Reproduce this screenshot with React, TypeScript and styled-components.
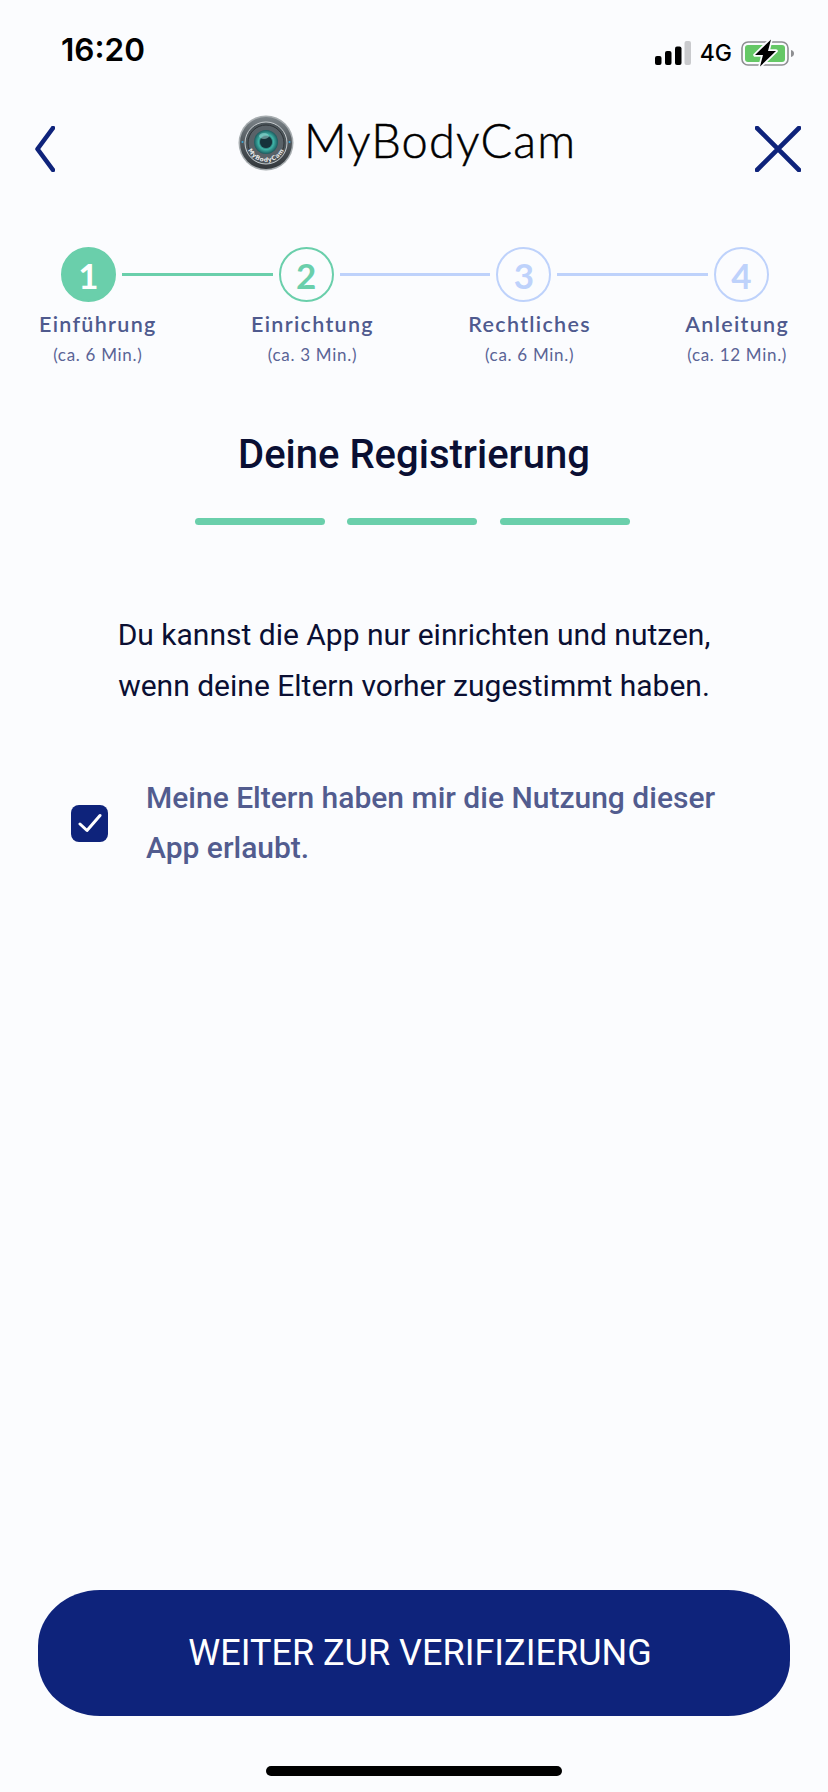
import React from 'react';
import styled, { createGlobalStyle } from 'styled-components';

const GlobalStyle = createGlobalStyle`
  html, body {
    margin: 0;
    padding: 0;
    background: #fbfcfe;
  }
  * {
    box-sizing: border-box;
  }
`;

const Page = styled.main`
  width: 828px;
  height: 1792px;
  background: #fbfcfe;
  display: flex;
  flex-direction: column;
  font-family: Roboto, 'Liberation Sans', sans-serif;
  overflow: hidden;
`;

const StatusBar = styled.div`
  height: 100px;
  padding: 28px 33px 0 61px;
  display: flex;
  justify-content: space-between;
  align-items: flex-start;
`;

const Time = styled.span`
  font-family: Inter, sans-serif;
  font-size: 31.5px;
  line-height: 44px;
  font-weight: 600;
  color: #000;
`;

const StatusIcons = styled.div`
  display: flex;
  align-items: center;
  gap: 9px;
  height: 44px;
  padding-top: 6px;
`;

const Network = styled.span`
  font-family: Inter, sans-serif;
  font-size: 23px;
  font-weight: 500;
  color: #000;
  line-height: 1;
`;

const NavBar = styled.header`
  height: 72px;
  padding: 14px 27px 0 35px;
  display: flex;
  justify-content: space-between;
  align-items: flex-start;
`;

const NavButton = styled.button`
  border: 0;
  padding: 12px 0 0;
  background: none;
  display: block;
  line-height: 0;
`;

const Brand = styled.div`
  display: flex;
  align-items: center;
  gap: 10px;
  margin: 1px 0 0 4px;
`;

const BrandName = styled.span`
  font-family: Lato, sans-serif;
  font-size: 47px;
  font-weight: 300;
  line-height: 50px;
  margin-bottom: 6px;
  letter-spacing: 1.1px;
  -webkit-text-stroke: 0.5px #000;
  color: #000;
`;

const Stepper = styled.section`
  margin-top: 75px;
`;

const StepTrack = styled.div`
  display: flex;
  align-items: center;
  padding: 0 59px 0 61px;
`;

const StepCircle = styled.div<{ $state: 'done' | 'active' | 'todo' }>`
  flex: none;
  width: 55px;
  height: 55px;
  border-radius: 50%;
  display: flex;
  align-items: center;
  justify-content: center;
  font-family: Lato, sans-serif;
  font-size: 35px;
  font-weight: 700;
  border: 2.5px solid ${({ $state }) => ($state === 'todo' ? '#bed2fb' : '#6acfab')};
  background: ${({ $state }) => ($state === 'done' ? '#6acfab' : 'transparent')};
  color: ${({ $state }) =>
    $state === 'done' ? '#fff' : $state === 'active' ? '#6acfab' : '#bed2fb'};
`;

const StepLine = styled.div<{ $done?: boolean }>`
  flex: 1;
  height: 3px;
  margin: 0 6px;
  background: ${({ $done }) => ($done ? '#6acfab' : '#bed2fb')};
`;

const StepLabels = styled.div`
  display: flex;
  justify-content: space-between;
  padding: 0 39px 0 39px;
  margin-top: 7px;
`;

const StepLabel = styled.div`
  display: flex;
  flex-direction: column;
  align-items: center;
  font-family: Lato, sans-serif;
  color: #4f5a8e;
`;

const StepName = styled.span`
  font-size: 21.5px;
  font-weight: 600;
  line-height: 30px;
  letter-spacing: 1.3px;
`;

const StepTime = styled.span`
  font-size: 17px;
  line-height: 30px;
  letter-spacing: 0.7px;
  color: #5a6496;
  margin-top: 1px;
`;

const Title = styled.h1`
  margin: 61px 0 0;
  font-size: 40px;
  line-height: 48px;
  font-weight: 500;
  text-align: center;
  color: #0a0f33;
`;

const Progress = styled.div`
  display: flex;
  justify-content: center;
  gap: 22.5px;
  margin-top: 39px;
  padding-right: 4px;
`;

const ProgressBar = styled.div`
  width: 130px;
  height: 7px;
  border-radius: 4px;
  background: #6acfab;
`;

const Intro = styled.p`
  margin: 84px 0 0;
  font-size: 30px;
  line-height: 51px;
  text-align: center;
  color: #0a0f33;
`;

const Consent = styled.label`
  display: flex;
  align-items: center;
  gap: 39px;
  margin-top: 62px;
  padding: 0 71px;
`;

const Box = styled.span`
  flex: none;
  width: 37px;
  height: 37px;
  border-radius: 8px;
  background: #0e237b;
  display: flex;
  align-items: center;
  justify-content: center;
`;

const ConsentText = styled.span`
  font-size: 30px;
  font-weight: 500;
  line-height: 50px;
  margin-left: -1px;
  color: #525c8f;
`;

const Footer = styled.footer`
  margin-top: auto;
  display: flex;
  flex-direction: column;
  align-items: center;
  padding-bottom: 16px;
`;

const NextButton = styled.button`
  width: 752px;
  height: 126px;
  border: 0;
  padding: 0 0 0 12px;
  border-radius: 62px / 56px;
  background: #0e237b;
  color: #fff;
  font-family: Roboto, sans-serif;
  font-size: 36px;
  font-weight: 400;
`;

const HomeBar = styled.div`
  width: 296px;
  height: 10px;
  margin-top: 50px;
  border-radius: 5px;
  background: #000;
`;

const steps = [
  { n: 1, name: 'Einf\u00fchrung', time: '(ca. 6 Min.)', state: 'done' as const },
  { n: 2, name: 'Einrichtung', time: '(ca. 3 Min.)', state: 'active' as const },
  { n: 3, name: 'Rechtliches', time: '(ca. 6 Min.)', state: 'todo' as const },
  { n: 4, name: 'Anleitung', time: '(ca. 12 Min.)', state: 'todo' as const },
];

function Logo() {
  return (
    <svg width="56" height="56" viewBox="0 0 56 56">
      <defs>
        <radialGradient id="lens" cx="50%" cy="50%" r="50%">
          <stop offset="0%" stopColor="#12313a" />
          <stop offset="42%" stopColor="#1c4a50" />
          <stop offset="62%" stopColor="#3fb5a8" />
          <stop offset="100%" stopColor="#1c5a5e" />
        </radialGradient>
        <linearGradient id="rim" x1="0" y1="0" x2="0" y2="1">
          <stop offset="0%" stopColor="#7d858a" />
          <stop offset="55%" stopColor="#4b5257" />
          <stop offset="100%" stopColor="#33383c" />
        </linearGradient>
        <path id="arc" d="M9 33 A20 20 0 0 0 47 33" />
      </defs>
      <circle cx="28" cy="28" r="27.5" fill="#a7adb0" />
      <circle cx="28" cy="28" r="26" fill="url(#rim)" />
      <circle cx="28" cy="28" r="21" fill="#4d565b" stroke="#d5d9db" strokeWidth="0.9" />
      <circle cx="28" cy="28" r="18" fill="#596268" stroke="#2e3337" strokeWidth="1" />
      <circle cx="28" cy="27" r="12" fill="url(#lens)" />
      <circle cx="28" cy="27" r="6" fill="#16323a" />
      <ellipse cx="26" cy="21" rx="5" ry="3" fill="#9fd8d6" opacity="0.55" />
      <circle cx="4.5" cy="27" r="1" fill="#39a7d8" />
      <circle cx="51.5" cy="27" r="1" fill="#39a7d8" />
      <text fontFamily="'DejaVu Sans', sans-serif" fontSize="6" fontWeight="700" fill="#e6e8e9" letterSpacing="0.4">
        <textPath href="#arc" startOffset="50%" textAnchor="middle">
          MyBodyCam
        </textPath>
      </text>
    </svg>
  );
}

function SignalIcon() {
  return (
    <svg width="37" height="24" viewBox="0 0 37 24">
      <rect x="1" y="15" width="6.5" height="9" rx="2" fill="#000" />
      <rect x="11" y="10" width="6.5" height="14" rx="2" fill="#000" />
      <rect x="21" y="5.5" width="6.5" height="18.5" rx="2" fill="#000" />
      <rect x="30.5" y="0" width="6.5" height="24" rx="2" fill="#c9cacd" />
    </svg>
  );
}

function BatteryIcon() {
  return (
    <svg width="54" height="28" viewBox="0 0 54 28">
      <rect x="1" y="3" width="46" height="23" rx="6" fill="none" stroke="#8e8f92" strokeWidth="1.6" />
      <rect x="4" y="6" width="40" height="17" rx="3" fill="#65c866" />
      <path d="M50 11 c2 .4 3 1.6 3 3.5 s-1 3.1-3 3.5z" fill="#8e8f92" />
      <path
        d="M30 0.5 L14 16 h8 L19 27.5 L35 12 h-8z"
        fill="#000"
        stroke="#fbfcfe"
        strokeWidth="3.5"
        paintOrder="stroke"
        strokeLinejoin="round"
      />
    </svg>
  );
}

export default function App() {
  return (
    <Page>
      <GlobalStyle />
      <StatusBar>
        <Time>16:20</Time>
        <StatusIcons>
          <SignalIcon />
          <Network>4G</Network>
          <BatteryIcon />
        </StatusIcons>
      </StatusBar>

      <NavBar>
        <NavButton aria-label={'Zur\u00fcck'}>
          <svg width="20" height="46" viewBox="0 0 20 46">
            <path d="M18 2 L2.5 23 L18 44" fill="none" stroke="#0e237b" strokeWidth="4.6" strokeLinecap="round" strokeLinejoin="round" />
          </svg>
        </NavButton>
        <Brand>
          <Logo />
          <BrandName>MyBodyCam</BrandName>
        </Brand>
        <NavButton aria-label={'Schlie\u00dfen'}>
          <svg width="46" height="46" viewBox="0 0 46 46">
            <path d="M2 2 L44 44 M44 2 L2 44" fill="none" stroke="#0e237b" strokeWidth="4.6" strokeLinecap="round" />
          </svg>
        </NavButton>
      </NavBar>

      <Stepper>
        <StepTrack>
          {steps.map((step, i) => (
            <React.Fragment key={step.n}>
              <StepCircle $state={step.state}>{step.n}</StepCircle>
              {i < steps.length - 1 && <StepLine $done={i === 0} />}
            </React.Fragment>
          ))}
        </StepTrack>
        <StepLabels>
          {steps.map((step) => (
            <StepLabel key={step.n}>
              <StepName>{step.name}</StepName>
              <StepTime>{step.time}</StepTime>
            </StepLabel>
          ))}
        </StepLabels>
      </Stepper>

      <Title>Deine Registrierung</Title>
      <Progress>
        <ProgressBar />
        <ProgressBar />
        <ProgressBar />
      </Progress>

      <Intro>
        Du kannst die App nur einrichten und nutzen,
        <br />
        wenn deine Eltern vorher zugestimmt haben.
      </Intro>

      <Consent>
        <Box>
          <svg width="24" height="20" viewBox="0 0 24 20">
            <path d="M2 11 L9 17.5 L22 2.5" fill="none" stroke="#fff" strokeWidth="3" strokeLinecap="round" strokeLinejoin="round" />
          </svg>
        </Box>
        <ConsentText>Meine Eltern haben mir die Nutzung dieser App erlaubt.</ConsentText>
      </Consent>

      <Footer>
        <NextButton>WEITER ZUR VERIFIZIERUNG</NextButton>
        <HomeBar />
      </Footer>
    </Page>
  );
}
